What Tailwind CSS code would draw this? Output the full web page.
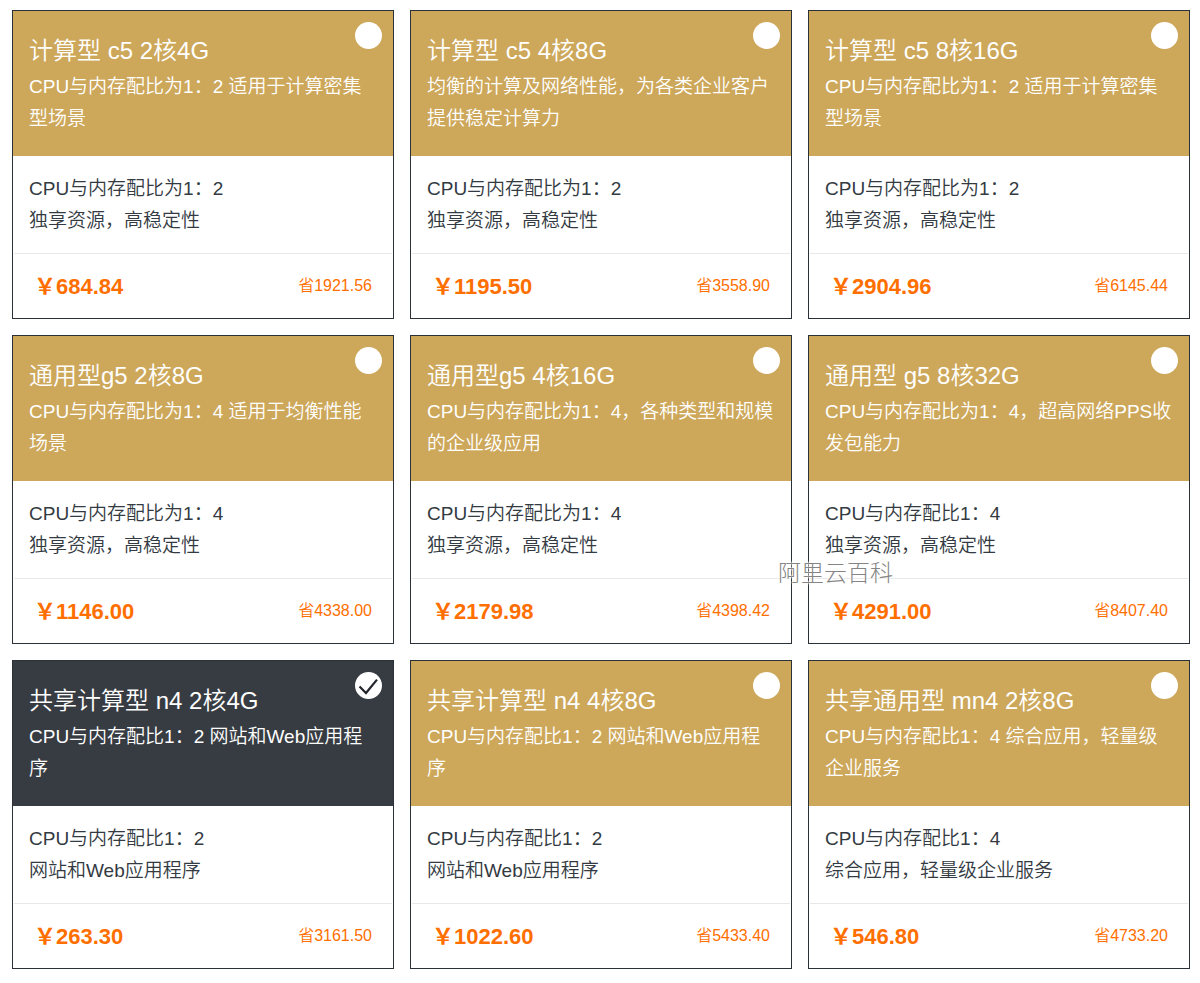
<!DOCTYPE html>
<html lang="zh-CN">
  <head>
    <meta charset="UTF-8" />
    <meta name="viewport" content="width=device-width, initial-scale=1.0" />
    <title>云服务器配置</title>
    <script src="https://cdn.jsdelivr.net/npm/@tailwindcss/browser@4"></script>
  </head>
  <body
    class="bg-white font-['Liberation_Sans','Noto_Sans_CJK_SC',sans-serif] text-[#333a42]"
  >
    <main class="relative pt-[10px] pr-[10px] pb-3 pl-3">
      <form id="plans" class="grid grid-cols-3 gap-4"></form>

      <!-- 水印 -->
      <span
        class="pointer-events-none absolute top-[557px] left-[778px] text-[23px] leading-8 font-light text-[#858585] [text-shadow:0_0_2px_white,0_0_2px_white,0_0_3px_white]"
        >阿里云百科</span
      >
    </main>

    <script>
      const plans = [
        {
          name: "计算型 c5 2核4G",
          desc: "CPU与内存配比为1：2 适用于计算密集型场景",
          specs: ["CPU与内存配比为1：2", "独享资源，高稳定性"],
          price: "684.84",
          save: "1921.56",
        },
        {
          name: "计算型 c5 4核8G",
          desc: "均衡的计算及网络性能，为各类企业客户提供稳定计算力",
          specs: ["CPU与内存配比为1：2", "独享资源，高稳定性"],
          price: "1195.50",
          save: "3558.90",
        },
        {
          name: "计算型 c5 8核16G",
          desc: "CPU与内存配比为1：2 适用于计算密集型场景",
          specs: ["CPU与内存配比为1：2", "独享资源，高稳定性"],
          price: "2904.96",
          save: "6145.44",
        },
        {
          name: "通用型g5 2核8G",
          desc: "CPU与内存配比为1：4 适用于均衡性能场景",
          specs: ["CPU与内存配比为1：4", "独享资源，高稳定性"],
          price: "1146.00",
          save: "4338.00",
        },
        {
          name: "通用型g5 4核16G",
          desc: "CPU与内存配比为1：4，各种类型和规模的企业级应用",
          specs: ["CPU与内存配比为1：4", "独享资源，高稳定性"],
          price: "2179.98",
          save: "4398.42",
        },
        {
          name: "通用型 g5 8核32G",
          desc: "CPU与内存配比为1：4，超高网络PPS收发包能力",
          specs: ["CPU与内存配比1：4", "独享资源，高稳定性"],
          price: "4291.00",
          save: "8407.40",
        },
        {
          name: "共享计算型 n4 2核4G",
          desc: "CPU与内存配比1：2 网站和Web应用程序",
          specs: ["CPU与内存配比1：2", "网站和Web应用程序"],
          price: "263.30",
          save: "3161.50",
          checked: true,
        },
        {
          name: "共享计算型 n4 4核8G",
          desc: "CPU与内存配比1：2 网站和Web应用程序",
          specs: ["CPU与内存配比1：2", "网站和Web应用程序"],
          price: "1022.60",
          save: "5433.40",
        },
        {
          name: "共享通用型 mn4 2核8G",
          desc: "CPU与内存配比1：4 综合应用，轻量级企业服务",
          specs: ["CPU与内存配比1：4", "综合应用，轻量级企业服务"],
          price: "546.80",
          save: "4733.20",
        },
      ];

      document.getElementById("plans").innerHTML = plans
        .map(
          (plan, i) => `
          <label for="plan-${i}" class="group block cursor-pointer border border-[#2b3138] bg-white">
            <div class="relative bg-[#cda75a] px-4 pt-5 pb-[21px] text-white group-has-checked:bg-[#373c43]">
              <h2 class="text-2xl leading-10 font-[350]">${plan.name}</h2>
              <p class="text-[19px] leading-8 font-[350]">${plan.desc}</p>
              <input
                id="plan-${i}"
                type="radio"
                name="plan"
                class="peer absolute top-[11px] right-[11px] size-[27px] cursor-pointer appearance-none rounded-full bg-white"
                ${plan.checked ? "checked" : ""}
              />
              <svg
                class="pointer-events-none absolute top-[11px] right-[11px] hidden size-[27px] text-[#22262b] peer-checked:block"
                viewBox="0 0 27 27"
                fill="none"
                stroke="currentColor"
                stroke-width="2.2"
              >
                <path d="M4.5 14.5L11 21 22 7.6" />
              </svg>
            </div>
            <div class="px-4 pt-[17px] pb-4 text-[19px] leading-8 font-[350]">
              ${plan.specs.map((spec) => `<p>${spec}</p>`).join("")}
            </div>
            <div class="mx-px flex h-[65px] items-center justify-between border-t border-[#e8e8e8] pr-5 pl-5 text-[#ff6f00]">
              <strong class="text-[22px] font-bold">￥${plan.price}</strong>
              <span class="text-base font-[350]">省${plan.save}</span>
            </div>
          </label>`
        )
        .join("");
    </script>
  </body>
</html>
